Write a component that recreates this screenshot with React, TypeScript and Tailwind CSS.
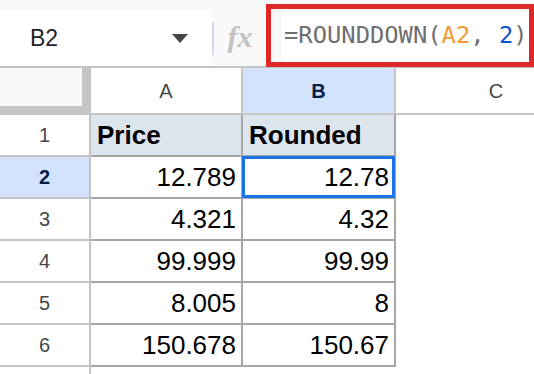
const rows = [
  { n: 1, a: "Price", b: "Rounded", head: true },
  { n: 2, a: "12.789", b: "12.78" },
  { n: 3, a: "4.321", b: "4.32" },
  { n: 4, a: "99.999", b: "99.99" },
  { n: 5, a: "8.005", b: "8" },
  { n: 6, a: "150.678", b: "150.67" },
];

function FormulaBar() {
  return (
    <div className="flex h-[66px] bg-[#f8f9fa]">
      <div className="mt-[10px] flex h-[56px] w-[212px] items-center bg-white">
        <span className="pl-[30px] text-[23px] text-[#1f1f1f]">B2</span>
        <svg width="16" height="9" viewBox="0 0 16 9" className="ml-auto mr-[24px]">
          <path d="M0 0 L16 0 L8 9 Z" fill="#444746" />
        </svg>
      </div>
      <div className="mt-[22px] h-[33px] w-[2px] bg-[#cfdcef]" />
      <div className="flex w-[52px] items-center justify-center pt-[8px]">
        <span className="font-['Liberation_Serif',serif] text-[30px] font-bold italic leading-none text-[#c2c2c2]">
          fx
        </span>
      </div>
      <div className="mt-[4px] flex h-[63px] flex-1 border-[5px] border-[#dc2828] bg-white">
        <div className="h-full w-[11px] bg-[#f8f9fa]" />
        <div className="flex items-center whitespace-pre pl-[2px] font-['DejaVu_Sans_Mono',monospace] text-[23.8px] text-[#6f6f6f]">
          <span>=ROUNDDOWN(</span>
          <span className="text-[#f29b35]">A2</span>
          <span>, </span>
          <span className="text-[#1155cc]">2</span>
          <span>)</span>
        </div>
      </div>
    </div>
  );
}

function ColumnHeaders() {
  return (
    <div className="flex h-[49px] overflow-hidden border-t-2 border-b-2 border-[#c4c4c4] text-[20px] text-[#444746]">
      <div className="h-full w-[91px] shrink-0 bg-[#c4c4c4]">
        <div className="h-[38px] w-[82px] bg-[#f8f9fa]" />
      </div>
      <div className="flex w-[150px] shrink-0 items-center justify-center bg-white">A</div>
      <div className="w-[2px] shrink-0 bg-[#c4c4c4]" />
      <div className="flex w-[151px] shrink-0 items-center justify-center bg-[#d3e3fd] font-bold text-[#041e49]">B</div>
      <div className="w-[2px] shrink-0 bg-[#c4c4c4]" />
      <div className="flex w-[200px] shrink-0 items-center justify-center bg-white">C</div>
    </div>
  );
}

function Row({ n, a, b, head }: { n: number; a: string; b: string; head?: boolean }) {
  const selected = n === 2;
  const cell = head
    ? "bg-[#dce4ee] font-bold justify-start pl-[6px]"
    : "bg-white justify-end pr-[5px]";
  return (
    <div className="flex h-[42px]">
      <div
        className={`flex w-[89px] shrink-0 items-center justify-center border-b-2 border-[#c4c4c4] text-[20px] ${
          selected ? "bg-[#d3e3fd] font-bold text-[#041e49]" : "bg-white text-[#444746]"
        }`}
      >
        {n}
      </div>
      <div className="w-[2px] shrink-0 bg-[#c4c4c4]" />
      <div className={`flex w-[150px] shrink-0 items-center border-b-2 border-[#a6a6a6] text-[26px] text-black ${cell}`}>
        {a}
      </div>
      <div className="w-[2px] shrink-0 bg-[#a6a6a6]" />
      <div className={`relative flex w-[151px] shrink-0 items-center border-b-2 border-[#a6a6a6] text-[26px] text-black ${cell}`}>
        {b}
        {selected && (
          <div className="absolute -left-[1px] -right-[1px] -top-[1px] -bottom-[1px] border-[3px] border-[#1a73e8]" />
        )}
      </div>
      <div className="w-[2px] shrink-0 bg-[#a6a6a6]" />
      <div className="flex-1 bg-white" />
    </div>
  );
}

export default function App() {
  return (
    <div className="h-[374px] w-[534px] overflow-hidden bg-white font-['Liberation_Sans',Arial,sans-serif]">
      <FormulaBar />
      <ColumnHeaders />
      {rows.map((r) => (
        <Row key={r.n} {...r} />
      ))}
      <div className="flex h-[20px]">
        <div className="w-[89px]" />
        <div className="w-[2px] bg-[#c4c4c4]" />
      </div>
    </div>
  );
}
